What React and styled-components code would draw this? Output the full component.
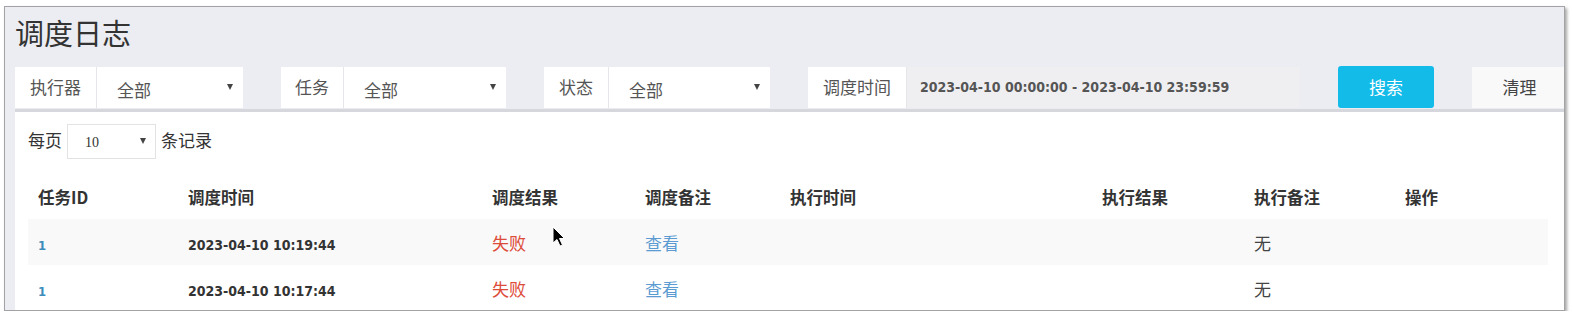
import React from "react";
import styled, { createGlobalStyle } from "styled-components";

const Global = createGlobalStyle`
  html, body { margin: 0; padding: 0; background: #ffffff; }
  body { font-family: "Noto Sans CJK SC", "Noto Sans", sans-serif; color: #333; }
`;

const CJK = `"Noto Sans CJK SC", "Noto Sans", sans-serif`;
const NUM = `"DejaVu Sans", "Noto Sans CJK SC", sans-serif`;

const Frame = styled.div`
  position: relative;
  margin: 6px 0 0 4px;
  width: 1561px;
  height: 305px;
  border: 1px solid #a3a3a6;
  box-shadow: 2px 2px 3px rgba(0, 0, 0, 0.35);
  background: #ecedf2;
  overflow: hidden;
  box-sizing: border-box;
`;

const Header = styled.div`
  padding: 7px 10px 0 10px;
`;

const Title = styled.h1`
  margin: 0;
  font-family: ${CJK};
  font-weight: 400;
  font-size: 29px;
  line-height: 36px;
  color: #333;
`;

const FilterRow = styled.div`
  display: flex;
  align-items: stretch;
  gap: 38px;
  margin-top: 17px;
  height: 41px;
  width: 1600px;
`;

const Group = styled.div`
  display: flex;
  width: ${(p) => p.$w}px;
  flex: none;
  background: #fff;
`;

const Label = styled.div`
  flex: none;
  width: ${(p) => p.$w}px;
  display: flex;
  align-items: center;
  justify-content: center;
  font-family: ${CJK};
  font-size: 17px;
  color: #555;
  border-right: 1px solid #e6e6ea;
  box-sizing: border-box;
  padding-bottom: 2px;
`;

const Select = styled.div`
  flex: 1;
  display: flex;
  align-items: center;
  justify-content: space-between;
  padding: 3px 10px 0 20px;
  font-family: ${CJK};
  font-size: 17px;
  color: #555;
`;

const Caret = styled.span`
  width: 0;
  height: 0;
  border-left: 3px solid transparent;
  border-right: 3px solid transparent;
  border-top: 6px solid #444;
  margin-top: -5px;
`;

const DateInput = styled.div`
  flex: 1;
  display: flex;
  align-items: center;
  padding: 0 0 2px 13px;
  background: #efeff2;
  font-family: ${NUM};
  font-stretch: condensed;
  font-weight: 700;
  font-size: 14px;
  color: #555;
`;

const Button = styled.div`
  flex: none;
  width: ${(p) => p.$w}px;
  display: flex;
  align-items: center;
  justify-content: center;
  font-family: ${CJK};
  font-size: 17px;
  border-radius: ${(p) => (p.$primary ? "3px" : "0")};
  background: ${(p) => (p.$primary ? "#13bbe9" : "#f9f9fa")};
  color: ${(p) => (p.$primary ? "#fff" : "#444")};
  margin-top: ${(p) => (p.$primary ? "-1px" : "0")};
  padding-bottom: 2px;
`;

const Box = styled.div`
  margin: 1px 0 0 10px;
  width: 1600px;
  height: 220px;
  background: #fff;
  border-top: 3px solid #d6d7dc;
  padding: 12px 0 0 13px;
  box-sizing: border-box;
`;

const LengthRow = styled.div`
  display: flex;
  align-items: center;
  gap: 5px;
  font-family: ${CJK};
  font-size: 17px;
  color: #333;
  padding-left: -1px;
`;

const LengthText = styled.span`
  margin-top: -4px;
`;

const SmallSelect = styled.div`
  width: 89px;
  height: 35px;
  box-sizing: border-box;
  border: 1px solid #e3e3e3;
  display: flex;
  align-items: center;
  justify-content: space-between;
  padding: 3px 9px 0 17px;
  font-family: "Liberation Serif", serif;
  font-size: 14px;
  color: #333;
`;

const Table = styled.table`
  margin-top: 16px;
  border-collapse: collapse;
  table-layout: fixed;
  width: 1520px;
`;

const Th = styled.th`
  text-align: left;
  padding: 0 10px;
  height: 44px;
  font-family: ${CJK};
  font-size: 16.5px;
  font-weight: 700;
  color: #333;
`;

const Tr = styled.tr`
  background: ${(p) => (p.$odd ? "#f9f9f9" : "#fff")};
`;

const Td = styled.td`
  padding: 0 10px;
  height: 46px;
  font-family: ${CJK};
  font-size: 17px;
  color: #444;
`;

const IdLink = styled.span`
  font-family: ${NUM};
  font-stretch: condensed;
  font-weight: 700;
  font-size: 13px;
  color: #3c8dbc;
`;

const DateText = styled.span`
  font-family: ${NUM};
  font-stretch: condensed;
  font-weight: 700;
  font-size: 14px;
  color: #333;
`;

const Fail = styled.span`
  color: #dd4b39;
`;

const ViewLink = styled.span`
  color: #5b9bd1;
`;

const Cursor = styled.svg`
  position: absolute;
  left: 547px;
  top: 219px;
`;

const cols = [150, 304, 153, 145, 312, 152, 151, 153];
const heads = ["任务ID", "调度时间", "调度结果", "调度备注", "执行时间", "执行结果", "执行备注", "操作"];
const rows = [
  { id: "1", time: "2023-04-10 10:19:44" },
  { id: "1", time: "2023-04-10 10:17:44" },
];

export default function App() {
  return (
    <>
      <Global />
      <Frame>
        <Header>
          <Title>调度日志</Title>
          <FilterRow>
            <Group $w={228}>
              <Label $w={82}>执行器</Label>
              <Select>全部<Caret /></Select>
            </Group>
            <Group $w={225}>
              <Label $w={63}>任务</Label>
              <Select>全部<Caret /></Select>
            </Group>
            <Group $w={226}>
              <Label $w={65}>状态</Label>
              <Select>全部<Caret /></Select>
            </Group>
            <Group $w={492}>
              <Label $w={99}>调度时间</Label>
              <DateInput>2023-04-10 00:00:00 - 2023-04-10 23:59:59</DateInput>
            </Group>
            <Button $w={96} $primary>搜索</Button>
            <Button $w={95}>清理</Button>
          </FilterRow>
        </Header>
        <Box>
          <LengthRow>
            <LengthText>每页</LengthText>
            <SmallSelect>10<Caret /></SmallSelect>
            <LengthText>条记录</LengthText>
          </LengthRow>
          <Table>
            <colgroup>
              {cols.map((w, i) => (
                <col key={i} style={{ width: w }} />
              ))}
            </colgroup>
            <thead>
              <tr>
                {heads.map((h) => (
                  <Th key={h}>{h}</Th>
                ))}
              </tr>
            </thead>
            <tbody>
              {rows.map((r, i) => (
                <Tr key={i} $odd={i % 2 === 0}>
                  <Td><IdLink>{r.id}</IdLink></Td>
                  <Td><DateText>{r.time}</DateText></Td>
                  <Td><Fail>失败</Fail></Td>
                  <Td><ViewLink>查看</ViewLink></Td>
                  <Td></Td>
                  <Td></Td>
                  <Td>无</Td>
                  <Td></Td>
                </Tr>
              ))}
            </tbody>
          </Table>
        </Box>
        <Cursor width="14" height="22" viewBox="0 0 14 22">
          <path d="M1 1 L1 17 L5 13.5 L8 20 L10.5 19 L7.5 12.5 L12.5 12.5 Z" fill="#000" stroke="#fff" strokeWidth="1" strokeLinejoin="round" />
        </Cursor>
      </Frame>
    </>
  );
}
